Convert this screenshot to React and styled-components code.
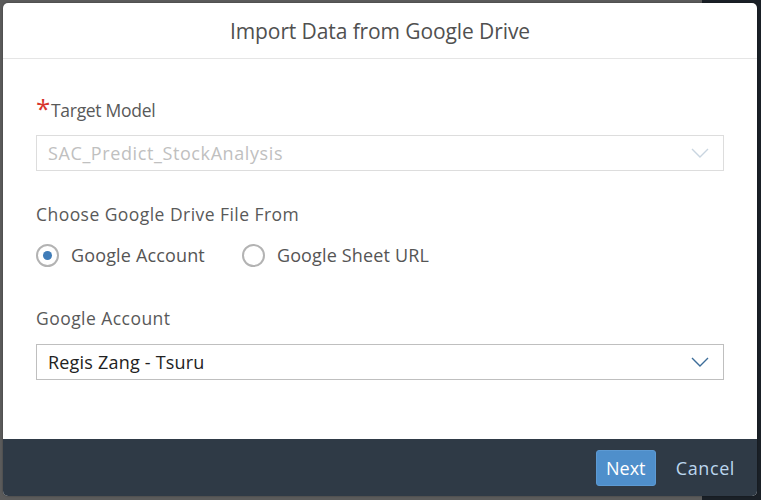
import React from 'react';
import styled, { createGlobalStyle } from 'styled-components';

const GlobalStyle = createGlobalStyle`
  html, body {
    margin: 0;
    padding: 0;
    height: 100%;
  }
  body {
    font-family: "Open Sans", "Noto Sans", sans-serif;
  }
`;

const Backdrop = styled.div`
  width: 761px;
  height: 500px;
  display: grid;
  grid-template-columns: 702px 59px;
  position: relative;
  overflow: hidden;
`;

const BackLeft = styled.div`
  background: #5b5b5b;
`;

const BackRight = styled.div`
  background: #1a2027;
`;

const Dialog = styled.div`
  position: absolute;
  left: 3px;
  top: 3px;
  width: 754px;
  height: 493px;
  background: #ffffff;
  border-radius: 5px;
  display: flex;
  flex-direction: column;
  overflow: hidden;
  box-shadow: 0 0 2px rgba(0, 0, 0, 0.4);
`;

const Header = styled.header`
  height: 55px;
  border-bottom: 1px solid #e5e5e5;
  display: flex;
  align-items: center;
  justify-content: center;
  font-size: 21px;
  color: #505050;
  letter-spacing: -0.1px;
`;

const Body = styled.div`
  flex: 1;
  padding: 41px 33px 0 33px;
  display: flex;
  flex-direction: column;
`;

const Label = styled.div`
  font-size: 17.5px;
  color: #595959;
  margin-bottom: ${(p) => p.$gap || 12}px;
  line-height: 20px;
  letter-spacing: ${(p) => (p.$tight ? '-0.3px' : '0.45px')};
`;

const Star = styled.span`
  color: #d8342c;
  font-size: 26px;
  line-height: 10px;
  vertical-align: -1px;
  margin-right: 1px;
`;

const Select = styled.div`
  height: 34px;
  border: 1px solid ${(p) => (p.$disabled ? '#dddddd' : '#bfbfbf')};
  display: flex;
  align-items: center;
  justify-content: space-between;
  padding: 0 14px 0 11px;
  font-size: 18px;
  letter-spacing: ${(p) => (p.$disabled ? '0.6px' : '0.2px')};
  color: ${(p) => (p.$disabled ? '#c0c0c0' : '#222222')};
  margin-bottom: ${(p) => p.$after || 0}px;
`;

const Chevron = ({ color }) => (
  <svg width="18" height="10" viewBox="0 0 18 10">
    <path d="M1 1 L9 9 L17 1" fill="none" stroke={color} strokeWidth="1.4" />
  </svg>
);

const RadioRow = styled.div`
  display: flex;
  align-items: center;
  gap: 37px;
  height: 24px;
  margin-bottom: 41px;
`;

const RadioItem = styled.label`
  display: flex;
  align-items: center;
  gap: 12px;
  font-size: 18px;
  letter-spacing: 0.15px;
  color: #555555;
`;

const RadioCircle = styled.span`
  width: 23px;
  height: 23px;
  border-radius: 50%;
  border: 2px solid #b3b3b3;
  box-sizing: border-box;
  display: flex;
  align-items: center;
  justify-content: center;

  &::after {
    content: '';
    width: 9px;
    height: 9px;
    border-radius: 50%;
    background: ${(p) => (p.$checked ? '#3f7cb8' : 'transparent')};
  }
`;

const Footer = styled.footer`
  height: 57px;
  background: #2f3a46;
  display: flex;
  align-items: center;
  justify-content: flex-end;
  padding: 0 22px 0 0;
  gap: 20px;
`;

const PrimaryButton = styled.button`
  height: 36px;
  width: 60px;
  background: #4f8fcb;
  border: 1px solid #5d9ad3;
  border-radius: 3px;
  color: #ffffff;
  font-family: inherit;
  font-size: 18px;
  padding: 0;
`;

const LinkButton = styled.button`
  background: none;
  border: none;
  color: #bcd6ee;
  font-family: inherit;
  font-size: 18px;
  letter-spacing: 0.6px;
  padding: 0;
`;

export default function App() {
  return (
    <>
      <GlobalStyle />
      <Backdrop>
        <BackLeft />
        <BackRight />
        <Dialog>
          <Header>Import Data from Google Drive</Header>
          <Body>
            <Label $gap={15} $tight>
              <Star>*</Star>Target Model
            </Label>
            <Select $disabled $after={33}>
              <span>SAC_Predict_StockAnalysis</span>
              <Chevron color="#c9d5e0" />
            </Select>
            <Label $gap={19}>Choose Google Drive File From</Label>
            <RadioRow>
              <RadioItem>
                <RadioCircle $checked />
                Google Account
              </RadioItem>
              <RadioItem>
                <RadioCircle />
                Google Sheet URL
              </RadioItem>
            </RadioRow>
            <Label $gap={16}>Google Account</Label>
            <Select>
              <span>Regis Zang - Tsuru</span>
              <Chevron color="#3d6d99" />
            </Select>
          </Body>
          <Footer>
            <PrimaryButton>Next</PrimaryButton>
            <LinkButton>Cancel</LinkButton>
          </Footer>
        </Dialog>
      </Backdrop>
    </>
  );
}
